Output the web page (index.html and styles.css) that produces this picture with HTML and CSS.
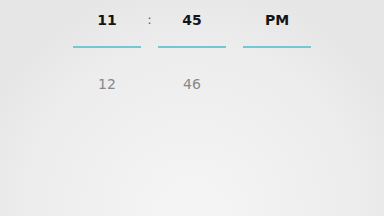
FILE: index.html
```html
<!DOCTYPE html>
<html lang="en">
<head>
    <meta charset="UTF-8">
    <title>Time picker</title>
    <link rel="stylesheet" href="styles.css">
</head>
<body>
    <div class="picker">
        <div class="cell current">11</div>
        <div class="sep">:</div>
        <div class="cell current">45</div>
        <div class="sep"></div>
        <div class="cell current">PM</div>

        <div class="cell next">12</div>
        <div class="sep"></div>
        <div class="cell next">46</div>
        <div class="sep"></div>
        <div class="cell next"></div>
    </div>
</body>
</html>
```

FILE: styles.css
```css
html, body {
    margin: 0;
    height: 100%;
}
body {
    font-family: "DejaVu Sans", sans-serif;
    background: radial-gradient(ellipse 60% 110% at 50% 100%, #f5f5f5 0%, #ededed 70%, #e6e6e6 100%);
    color: #111;
}
.picker {
    display: grid;
    grid-template-columns: 68px 17px 68px 17px 68px;
    justify-content: center;
    padding-top: 6px;
}
.cell {
    text-align: center;
    font-size: 14px;
}
.current {
    height: 40px;
    line-height: 28px;
    border-bottom: 2px solid #74c8d4;
    color: #151515;
    font-weight: 600;
}
.next {
    margin-top: 22px;
    line-height: 28px;
    color: #888;
}
.sep {
    text-align: center;
    font-size: 12px;
    line-height: 28px;
    color: #555;
}
```
